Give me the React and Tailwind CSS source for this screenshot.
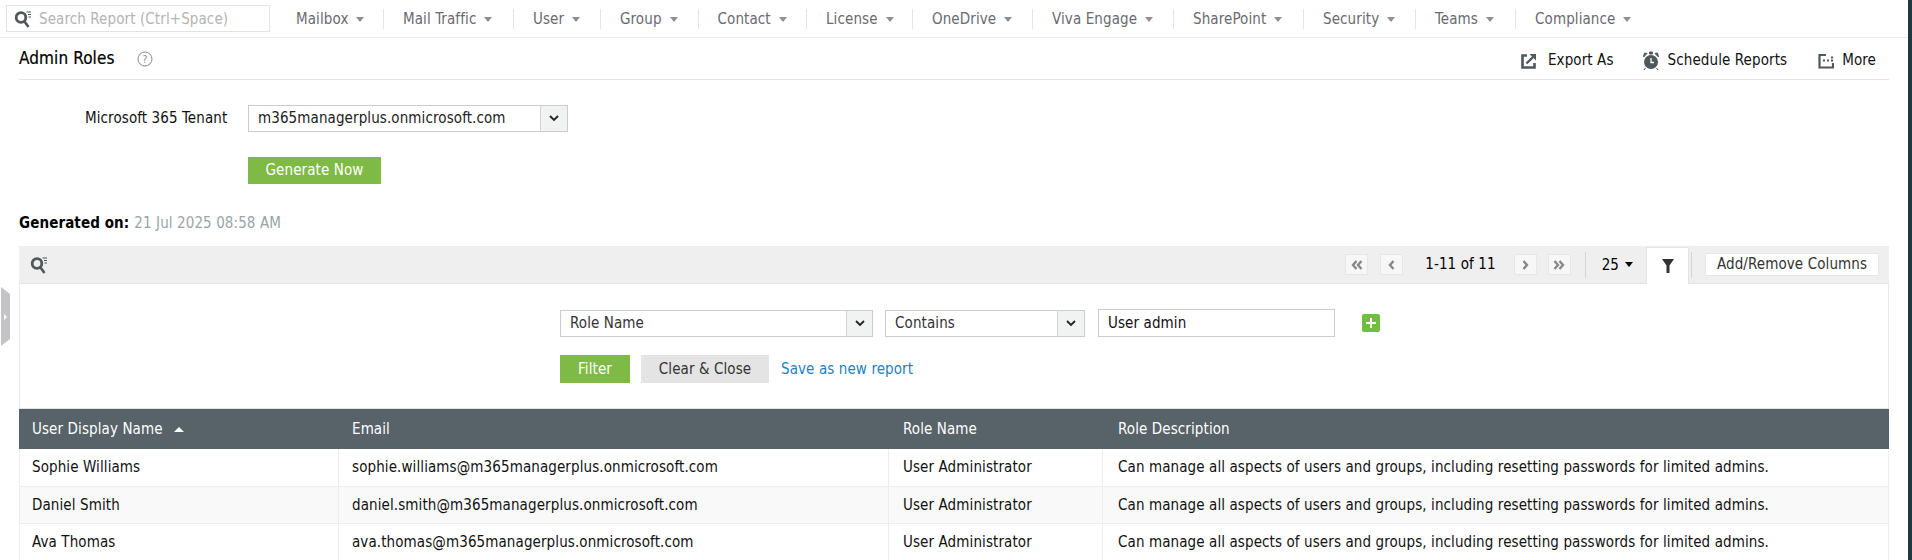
import React from "react";

const menu = [
  ["Mailbox", "w-[107px]"],
  ["Mail Traffic", "w-[130px]"],
  ["User", "w-[87px]"],
  ["Group", "w-[97.500px]"],
  ["Contact", "w-[108.500px]"],
  ["License", "w-[106px]"],
  ["OneDrive", "w-[120px]"],
  ["Viva Engage", "w-[141px]"],
  ["SharePoint", "w-[130px]"],
  ["Security", "w-[112px]"],
  ["Teams", "w-[100px]"],
  ["Compliance", ""],
];

const rows = [
  ["Sophie Williams", "sophie.williams@m365managerplus.onmicrosoft.com", "bg-white"],
  ["Daniel Smith", "daniel.smith@m365managerplus.onmicrosoft.com", "bg-[#f9f9f9]"],
  ["Ava Thomas", "ava.thomas@m365managerplus.onmicrosoft.com", "bg-white"],
];

function SearchIcon() {
  return (
    <svg width="18" height="18" viewBox="0 0 18 18" fill="none">
      <circle cx="7" cy="7.500" r="4.800" stroke="#4f585c" strokeWidth="2.800" />
      <path d="M10.500 11.500l4 5.500" stroke="#4f585c" strokeWidth="2.600" />
      <path d="M12.500 2h4.500M14 4.500h3M14.500 7H17" stroke="#4f585c" strokeWidth="1.100" />
    </svg>
  );
}

function Caret({ className = "border-t-[#8f8f94]" }) {
  return <span className={`inline-block h-0 w-0 border-x-[4.500px] border-t-[5px] border-x-transparent ${className}`} />;
}

function Chevron() {
  return (
    <svg width="10" height="7" viewBox="0 0 10 7" fill="none">
      <path d="M1 1l4 4 4-4" stroke="#222" strokeWidth="1.800" />
    </svg>
  );
}

function Select({ widthClass, chevronClass, text, textClass = "" }) {
  return (
    <div className={`flex h-[27px] border border-[#cccccc] bg-white ${widthClass}`}>
      <div className={`flex-1 pl-[9px] leading-[25px] ${textClass}`}>{text}</div>
      <div className={`flex items-center justify-center border-l border-[#d5d5d5] bg-[#f1f3f3] ${chevronClass}`}>
        <Chevron />
      </div>
    </div>
  );
}

function PageButton({ children, className = "" }) {
  return (
    <div className={`flex h-[21px] w-[23px] items-center justify-center border border-[#e6e6e6] bg-[#f7f7f7] ${className}`}>
      {children}
    </div>
  );
}

function Double({ flip }) {
  return (
    <svg width="12" height="10" viewBox="0 0 12 10" fill="none" className={flip ? "rotate-180" : ""}>
      <path d="M5.500 1L2 5l3.500 4M10.500 1L7 5l3.500 4" stroke="#888" strokeWidth="2.400" />
    </svg>
  );
}

function Single({ flip }) {
  return (
    <svg width="7" height="10" viewBox="0 0 7 10" fill="none" className={flip ? "rotate-180" : ""}>
      <path d="M5.500 1L2 5l3.500 4" stroke="#888" strokeWidth="2.400" />
    </svg>
  );
}

export default function App() {
  return (
    <div className="relative h-[560px] w-[1912px] overflow-hidden bg-white text-[15px] tracking-[0.1px] text-[#222] font-['DejaVu_Sans_Condensed','DejaVu_Sans',sans-serif]">
      <div className="absolute right-0 top-0 h-full w-[4px] bg-[#1f3a3f]" />

      <div className="flex h-[38px] items-center border-b border-[#e9e9e9] pl-[6px]">
        <div className="mr-[7px] flex h-[27px] w-[264px] items-center gap-[7px] border border-[#e1e4e6] pl-[7px] text-[#b4b4b4]">
          <SearchIcon />
          <span className="mt-[2px]">Search Report (Ctrl+Space)</span>
        </div>
        {menu.map(([label, w], i) => (
          <div key={label} className={`flex h-[20px] items-center gap-[8px] pl-[19px] pt-[2px] text-[#6a6a70] ${w} ${i < menu.length - 1 ? "border-r border-[#e4e4e4]" : ""}`}>
            <span>{label}</span>
            <Caret />
          </div>
        ))}
      </div>

      <div className="mx-[19px] w-[1870px]">
        <div className="flex h-[42px] items-center border-b border-[#e3e3e3]">
          <h1 className="text-[17px] font-medium text-black [-webkit-text-stroke:0.2px_black]">Admin Roles</h1>
          <svg width="16" height="16" viewBox="0 0 16 16" fill="none" className="ml-[22px]">
            <circle cx="8" cy="8" r="7" stroke="#888" />
            <text x="8" y="11.500" textAnchor="middle" fontSize="10" fill="#888">?</text>
          </svg>
          <div className="ml-auto flex items-center pt-[4px] text-[#111]">
            <svg width="16" height="16" viewBox="0 0 16 16" fill="none">
              <path d="M6 2.500H1.500V14.500H13.500V10" stroke="#4f585c" strokeWidth="2.600" />
              <path d="M5.500 10.500L12 4" stroke="#4f585c" strokeWidth="2.400" />
              <path d="M8.500 1h6.500v6.500z" fill="#4f585c" />
            </svg>
            <span className="ml-[11px]">Export As</span>
            <svg width="18" height="20" viewBox="0 0 18 20" className="ml-[28px]">
              <circle cx="9" cy="11" r="7" fill="#4f585c" />
              <path d="M1.500 6L5 2.500 2.500 2zM16.500 6L13 2.500 15.500 2zM7.500 1h3v2h-3zM3.500 17l-1.500 2M14.500 17l1.500 2" fill="#4f585c" stroke="#4f585c" />
              <path d="M9 7v4.500h3" stroke="#fff" strokeWidth="1.300" fill="none" />
            </svg>
            <span className="ml-[8px]">Schedule Reports</span>
            <svg width="16" height="16" viewBox="0 0 16 16" fill="none" className="ml-[31px]">
              <path d="M8 2H1.500V14.500H15V10" stroke="#4f585c" strokeWidth="2.200" />
              <path d="M5 7.500h2M9 7.500h2M13 7.500h2M13 4.500h2" stroke="#4f585c" strokeWidth="1.800" />
            </svg>
            <span className="ml-[8px] mr-[13px]">More</span>
          </div>
        </div>

        <div className="mt-[25px] flex items-center">
          <span className="ml-[66px] w-[163px] text-[#111]">Microsoft 365 Tenant</span>
          <Select widthClass="w-[320px]" chevronClass="w-[27px]" text="m365managerplus.onmicrosoft.com" />
        </div>
        <button className="ml-[229px] mt-[25px] block h-[27px] w-[133px] bg-[#7fba46] text-white">Generate Now</button>

        <div className="mt-[29px] h-[20px] leading-[20px]">
          <b className="font-bold text-black">Generated on:</b>
          <span className="ml-[5px] text-[#9aa4a8]">21 Jul 2025 08:58 AM</span>
        </div>

        <div className="mt-[13px] flex h-[38px] items-center border-b border-[#e3e3e3] bg-[#efefef] pl-[11px]">
          <SearchIcon />
          <div className="ml-auto flex h-[37px] items-center">
            <PageButton><Double /></PageButton>
            <PageButton className="ml-[12px]"><Single /></PageButton>
            <span className="ml-[22px] mr-[18px] text-black">1-11 of 11</span>
            <PageButton><Single flip /></PageButton>
            <PageButton className="ml-[11px]"><Double flip /></PageButton>
            <div className="ml-[14px] h-[26px] border-l border-[#d4d4d4]" />
            <span className="ml-[16px] mt-[2px] text-black">25</span>
            <Caret className="ml-[6px] border-t-black" />
            <div className="relative top-[1px] ml-[13px] flex h-[37px] w-[43px] items-center justify-center border-x border-t border-[#e3e3e3] bg-white">
              <svg width="14" height="16" viewBox="0 0 14 16"><path d="M1 1h12L8.500 7.500V15h-3V7.500z" fill="#333" /></svg>
            </div>
            <div className="ml-[2px] h-[26px] border-l border-[#d4d4d4]" />
            <div className="ml-[13px] mr-[10px] flex h-[23px] w-[174px] items-center justify-center border border-[#e6e6e6] bg-white text-[#333]">Add/Remove Columns</div>
          </div>
        </div>

        <div className="border-x border-[#e9e9e9]">
          <div className="pl-[540px] pt-[25px]">
            <div className="flex items-center text-[#333]">
              <Select widthClass="w-[313px]" chevronClass="w-[26px]" text="Role Name" />
              <Select widthClass="w-[200px] ml-[12px]" chevronClass="w-[27px]" text="Contains" />
              <div className="ml-[13px] h-[28px] w-[237px] border border-[#cccccc] pl-[9px] leading-[26px] text-[#111]">User admin</div>
              <div className="ml-[27px] flex h-[18px] w-[18px] items-center justify-center rounded-[2px] bg-[#6fbe3d] text-[#fff]">
                <svg width="10" height="10" viewBox="0 0 10 10"><path d="M5 0v10M0 5h10" stroke="#fff" strokeWidth="2" /></svg>
              </div>
            </div>
            <div className="mt-[18px] flex items-center">
              <button className="h-[28px] w-[70px] bg-[#7fba46] text-white">Filter</button>
              <button className="ml-[11px] h-[28px] w-[128px] bg-[#e4e4e4] text-[#333]">Clear &amp; Close</button>
              <span className="ml-[12px] text-[#1f7fc0]">Save as new report</span>
            </div>
          </div>
          <div className="mt-[25px] border-t border-[#e3e3e3]" />
        </div>

        <div className="flex h-[40px] items-center bg-[#576269] text-white">
          <div className="flex w-[320px] items-center gap-[11px] pl-[13px]">
            <span>User Display Name</span>
            <span className="h-0 w-0 border-x-[5px] border-b-[5px] border-x-transparent border-b-white" />
          </div>
          <div className="w-[550px] pl-[13px]">Email</div>
          <div className="w-[214px] pl-[14px]">Role Name</div>
          <div className="pl-[15px]">Role Description</div>
        </div>

        {rows.map(([name, email, bg]) => (
          <div key={name} className={`flex h-[37.500px] items-center border-x border-b border-[#ededed] text-[#111] ${bg}`}>
            <div className="h-full w-[319px] border-r border-[#ededed] pl-[12px] leading-[37px]">{name}</div>
            <div className="h-full w-[550px] border-r border-[#ededed] pl-[13px] leading-[37px]">{email}</div>
            <div className="h-full w-[214px] border-r border-[#ededed] pl-[14px] leading-[37px]">User Administrator</div>
            <div className="h-full pl-[15px] leading-[37px]">Can manage all aspects of users and groups, including resetting passwords for limited admins.</div>
          </div>
        ))}
      </div>

      <div className="absolute left-px top-[287px] flex h-[59px] w-[9px] items-center justify-center bg-[#c4c4c6] [clip-path:polygon(0_0,100%_12%,100%_88%,0_100%)]">
        <span className="h-0 w-0 border-y-[3px] border-l-[3px] border-y-transparent border-l-white" />
      </div>
    </div>
  );
}
